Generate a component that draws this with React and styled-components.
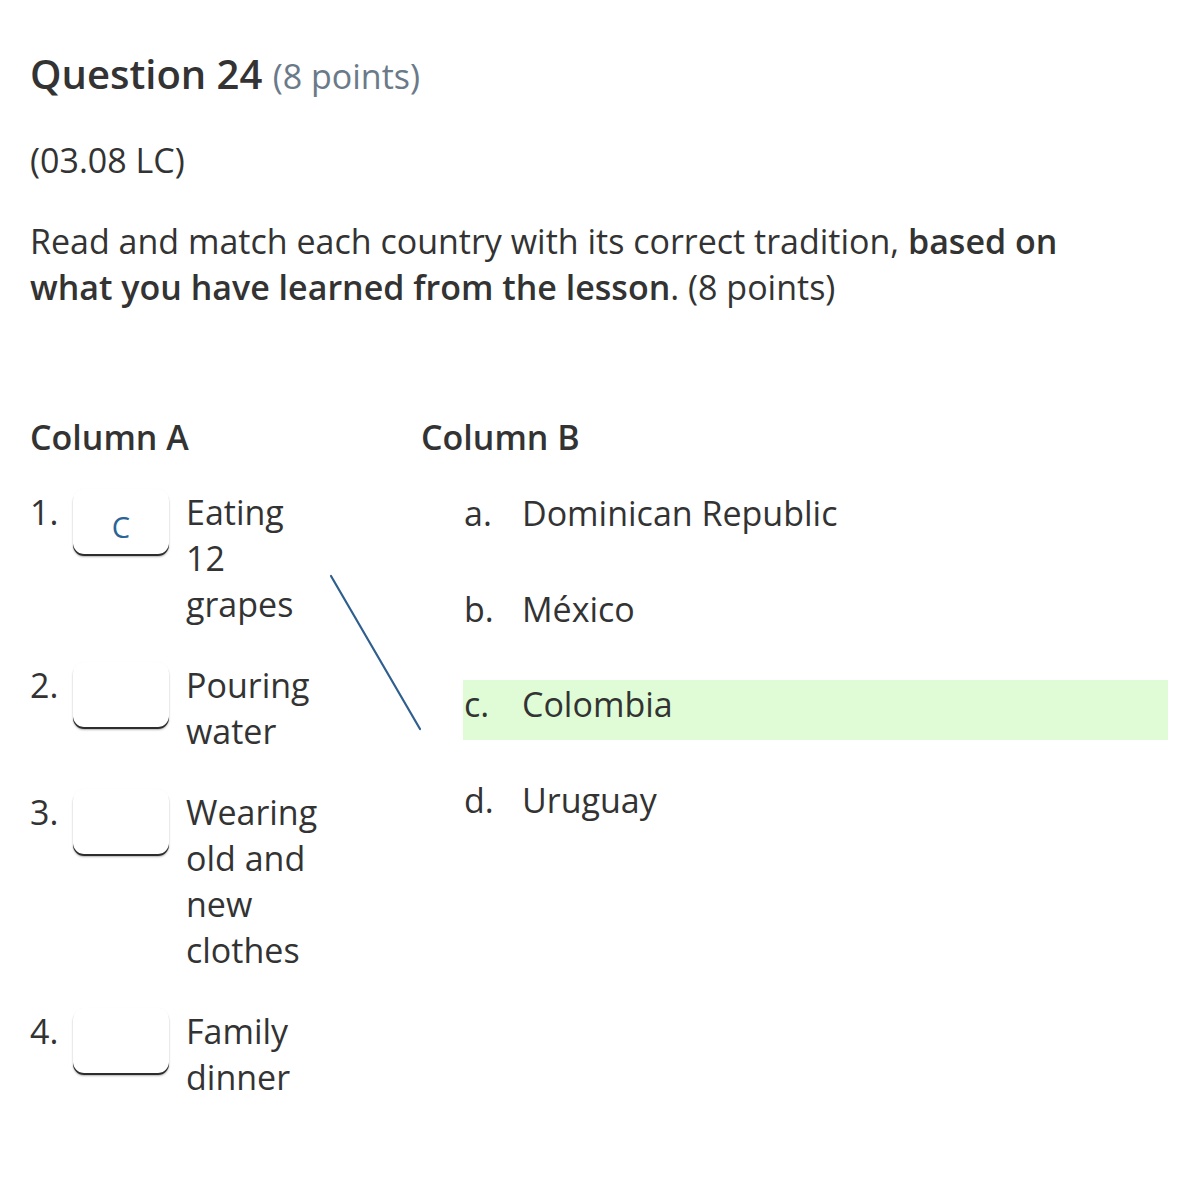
import React from 'react';
import styled, { createGlobalStyle } from 'styled-components';

const GlobalStyle = createGlobalStyle`
    body {
        margin: 0;
        background: #fff;
        font-family: "Open Sans", "Noto Sans", sans-serif;
        color: #333;
    }
`

const Page = styled.div`
    position: relative;
    padding: 46px 30px 60px 30px;
`

const Title = styled.h2`
    margin: 0;
    font-size: 40px;
    line-height: 56px;
    font-weight: 600;
    color: #333;
`

const Points = styled.span`
    font-weight: 400;
    font-size: 34px;
    color: #6b7a89;
`

const Code = styled.p`
    margin: 33px 0 0;
    font-size: 34px;
    line-height: 46px;
`

const Prompt = styled.p`
    margin: 35px 0 0;
    max-width: 1080px;
    font-size: 34px;
    line-height: 46px;

    b { font-weight: 600; }
`

const Columns = styled.div`
    display: grid;
    grid-template-columns: 391px 1fr;
    margin-top: 104px;
`

const ColumnHeader = styled.h3`
    margin: 0 0 29px;
    font-size: 34px;
    line-height: 46px;
    font-weight: 600;
`

const MatchRow = styled.div`
    display: flex;
    align-items: flex-start;
    margin-bottom: 35px;
    font-size: 34px;
    line-height: 46px;
`

const Num = styled.span`
    width: 43px;
    flex: none;
`

const Blank = styled.div`
    flex: none;
    box-sizing: border-box;
    width: 96px;
    height: 65px;
    margin-right: 17px;
    border-radius: 11px;
    box-shadow:
        0 2px 0 #2d2d2d,
        0 3px 2px rgba(0, 0, 0, 0.3),
        0 0 1px rgba(0, 0, 0, 0.06);
    display: flex;
    align-items: center;
    justify-content: center;
    padding-top: 10px;
    font-size: 29px;
    line-height: 32px;
    color: #2a6496;
`

const Tradition = styled.span`
    width: 138px;
`

const Choice = styled.div`
    display: flex;
    margin: 0 0 35.5px 42px;
    padding: 1px 0 13px 1px;
    font-size: 34px;
    line-height: 46px;
    background: ${({ $picked }) => ($picked ? '#e0fcd6' : 'transparent')};
`

const Letter = styled.span`
    width: 58px;
    flex: none;
`

const Stroke = styled.svg`
    position: absolute;
    left: 0;
    top: 0;
    pointer-events: none;
`

const columnA = [
    { n: '1.', answer: 'C', text: 'Eating 12 grapes' },
    { n: '2.', answer: '', text: 'Pouring water' },
    { n: '3.', answer: '', text: 'Wearing old and new clothes' },
    { n: '4.', answer: '', text: 'Family dinner' },
]

const columnB = [
    { l: 'a.', text: 'Dominican Republic' },
    { l: 'b.', text: 'México' },
    { l: 'c.', text: 'Colombia', picked: true },
    { l: 'd.', text: 'Uruguay' },
]

export default function App() {
    return <Page>
        <GlobalStyle />
        <Title>Question 24 <Points>(8 points)</Points></Title>
        <Code>(03.08 LC)</Code>
        <Prompt>
            Read and match each country with its correct tradition, <b>based on what you have learned from the lesson</b>. (8 points)
        </Prompt>
        <Columns>
            <div>
                <ColumnHeader>Column A</ColumnHeader>
                {columnA.map(r => <MatchRow key={r.n}>
                    <Num>{r.n}</Num>
                    <Blank>{r.answer}</Blank>
                    <Tradition>{r.text}</Tradition>
                </MatchRow>)}
            </div>
            <div>
                <ColumnHeader>Column B</ColumnHeader>
                {columnB.map(c => <Choice key={c.l} $picked={c.picked}>
                    <Letter>{c.l}</Letter>
                    <span>{c.text}</span>
                </Choice>)}
            </div>
        </Columns>
        <Stroke width="1198" height="1200">
            <line x1="331" y1="576" x2="420" y2="729" stroke="#2f5f8e" strokeWidth="2.2" strokeLinecap="round" />
        </Stroke>
    </Page>
}
